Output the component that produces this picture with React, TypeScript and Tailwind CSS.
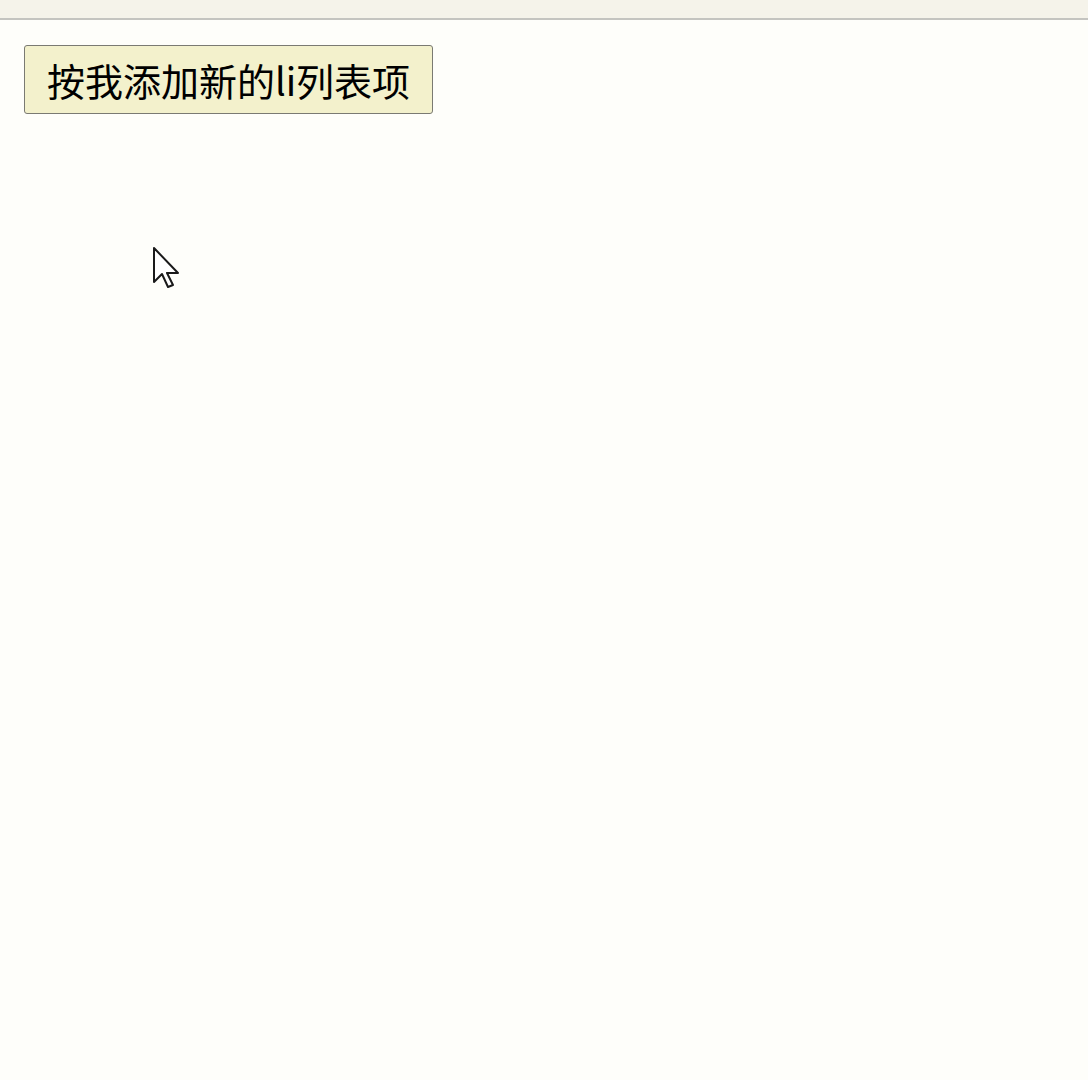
export default function App() {
  return (
    <div className="relative min-h-[1080px] w-full bg-[#fefefa]" style={{ fontFamily: '"Microsoft YaHei", "Noto Sans CJK SC", sans-serif' }}>
      <div className="h-[20px] border-b-2 border-[#c4c4c0] bg-[#f5f3ea]" />
      <div className="px-[24px] pt-[25px]">
        <button className="h-[69px] w-[409px] rounded-[3px] border border-[#7a7a72] bg-[#f3f1cc] text-[38px] leading-none text-black">
          按我添加新的li列表项
        </button>
      </div>
      <svg className="absolute left-[152px] top-[246px]" width="30" height="44" viewBox="0 0 30 44">
        <path
          d="M2 2 L2 36 L10 28 L16 41 L21 39 L15 27 L26 27 Z"
          fill="#ffffff"
          stroke="#1a1a1a"
          strokeWidth="2"
          strokeLinejoin="round"
        />
      </svg>
    </div>
  );
}
